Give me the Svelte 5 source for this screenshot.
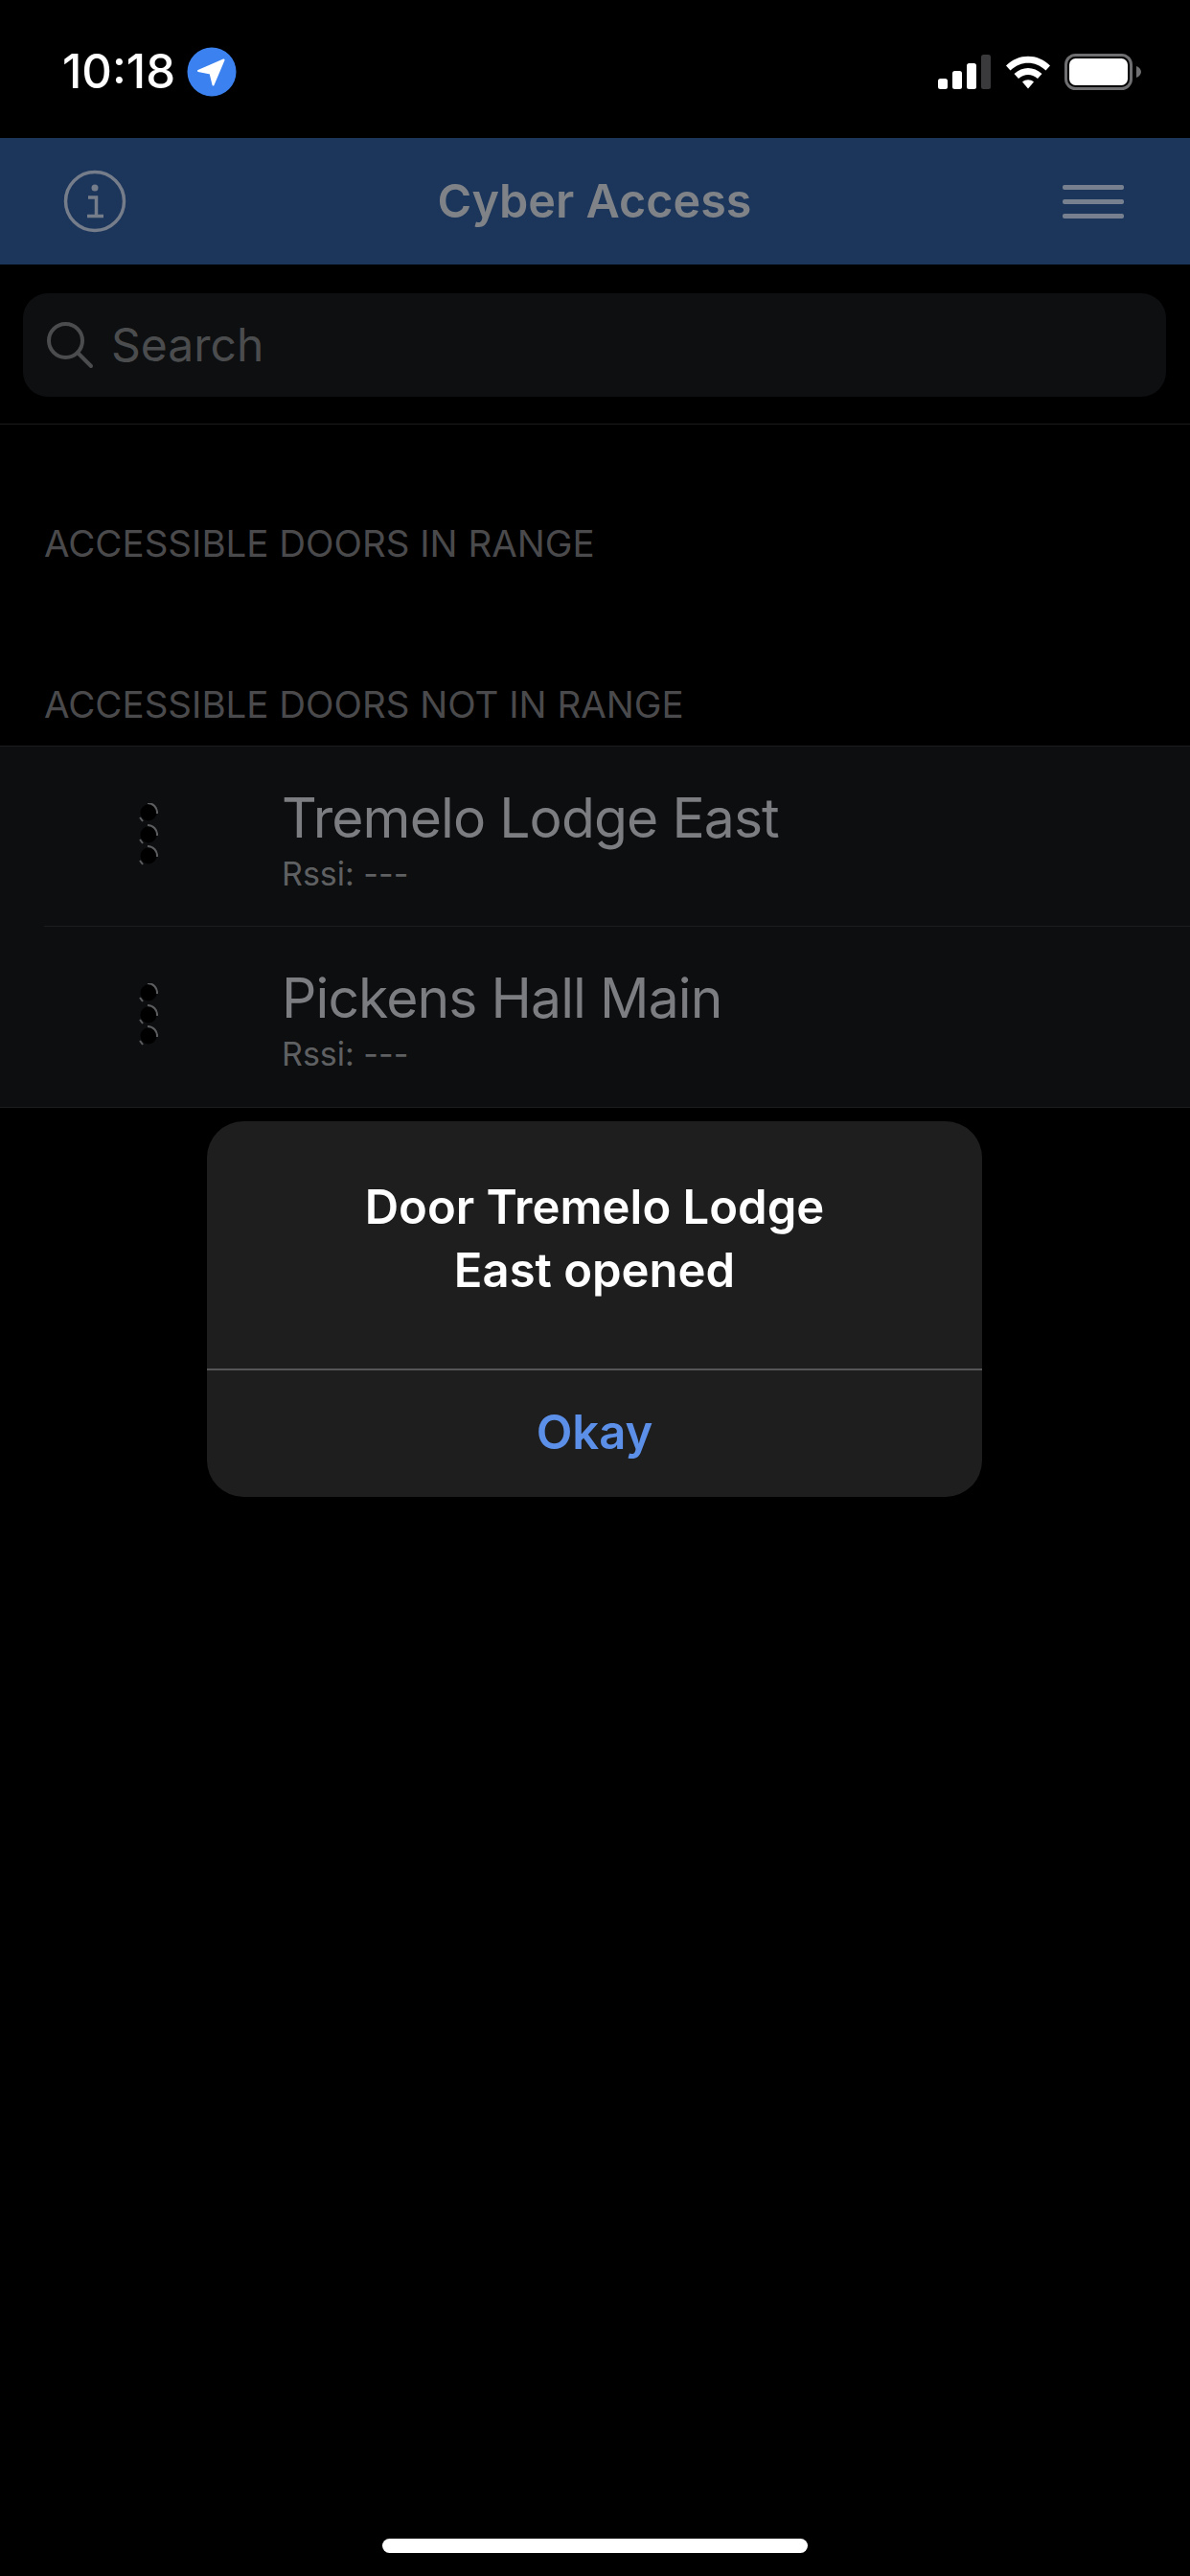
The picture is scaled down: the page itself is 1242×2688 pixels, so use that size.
<script>
	const doors = ['Tremelo Lodge East', 'Pickens Hall Main'];
</script>

<div class="screen">
	<header class="status">
		<div class="clock">
			<span class="time">10:18</span>
			<svg class="loc" viewBox="0 0 52 52" width="52" height="52">
				<circle cx="26" cy="26" r="25.5" fill="#3b82f0" />
				<path d="M12 25 L38.5 13.5 L27.5 39.5 L24.6 27.6 Z" fill="#fff" stroke="#fff" stroke-width="2" stroke-linejoin="round" />
			</svg>
		</div>
		<div class="indicators">
			<svg viewBox="0 0 56 36" width="56" height="36">
				<rect x="0" y="25" width="10" height="11" rx="2.5" fill="#fff" />
				<rect x="15" y="17" width="10" height="19" rx="2.5" fill="#fff" />
				<rect x="30" y="9" width="10" height="27" rx="2.5" fill="#fff" />
				<rect x="45" y="0" width="10" height="36" rx="2.5" fill="#3a3a3c" />
			</svg>
			<svg viewBox="0 0 48 36" width="48" height="36">
				<path d="M1 11.5 C14 -1.5 34 -1.5 47 11.5 L42.5 16.5 C31.5 6 16.5 6 5.5 16.5 Z" fill="#fff" />
				<path d="M9.5 20 C18 12 30 12 38.500 20 L34 25 C27.500 19.500 20.500 19.500 14 25 Z" fill="#fff" />
				<path d="M18 28.500 C21.500 25.500 26.500 25.500 30 28.500 L24 35.500 Z" fill="#fff" />
			</svg>
			<svg viewBox="0 0 81 38" width="81" height="38">
				<rect x="1.500" y="1.500" width="68" height="35" rx="10" fill="none" stroke="#6f6f71" stroke-width="3" />
				<rect x="5" y="5" width="61" height="28" rx="6.500" fill="#fff" />
				<path d="M75 13 C78 14 80 16.500 80 19 C80 21.500 78 24 75 25 Z" fill="#6f6f71" />
			</svg>
		</div>
	</header>

	<nav class="bar">
		<svg class="info" viewBox="0 0 66 66" width="66" height="66" fill="none" stroke="#757c8a" stroke-width="3.500">
			<circle cx="33" cy="33" r="30.500" />
			<circle cx="33" cy="19" r="3.500" fill="#757c8a" stroke="none" />
			<path d="M26 29 H34.500 V48 M25 48.500 H42" stroke-width="3.500" />
		</svg>
		<h1>Cyber Access</h1>
		<div class="menu"><i></i><i></i><i></i></div>
	</nav>

	<div class="search-wrap">
		<div class="search">
			<svg viewBox="0 0 50 50" width="50" height="50" fill="none" stroke="#4b4c4e" stroke-width="4" stroke-linecap="round">
				<circle cx="20.500" cy="20.500" r="17.500" />
				<path d="M33 33 L47 47" />
			</svg>
			<span>Search</span>
		</div>
	</div>

	<h2 class="section first">ACCESSIBLE DOORS IN RANGE</h2>
	<h2 class="section">ACCESSIBLE DOORS NOT IN RANGE</h2>

	<ul class="list">
		{#each doors as door}
			<li>
				<svg class="spin" viewBox="0 0 20 66" width="20" height="66" fill="none" stroke="#5c5d5f" stroke-width="2">
					{#each [10, 33, 55] as cy}
						<circle cx="10" {cy} r="8.500" fill="#000" stroke="none" />
						<path d={`M9 ${cy - 10} A 10 10 0 0 1 19 ${cy + 1}`} />
						<path d={`M1 ${cy + 5} L4 ${cy + 9}`} />
					{/each}
				</svg>
				<div class="text">
					<div class="name">{door}</div>
					<div class="rssi">Rssi: ---</div>
				</div>
			</li>
		{/each}
	</ul>

	<div class="alert">
		<div class="message">Door Tremelo Lodge<br />East opened</div>
		<div class="action">Okay</div>
	</div>

	<div class="home"></div>
</div>

<style>
	:global(body) {
		margin: 0;
		background: #000;
	}

	.screen {
		position: relative;
		width: 1242px;
		height: 2688px;
		overflow: hidden;
		background: #000;
		font-family: Inter, 'Liberation Sans', sans-serif;
	}

	.status {
		height: 144px;
		box-sizing: border-box;
		padding: 49px 50px 0 65px;
		display: flex;
		justify-content: space-between;
		align-items: flex-start;
	}

	.clock {
		display: flex;
		align-items: center;
		gap: 12px;
	}

	.time {
		width: 118px;
		color: #fff;
		font-size: 49px;
		font-weight: 500;
		line-height: 52px;
		white-space: nowrap;
	}

	.indicators {
		display: flex;
		align-items: center;
		gap: 14px;
		padding-top: 7px;
	}

	.bar {
		height: 132px;
		background: #1c355a;
		display: flex;
		align-items: center;
		justify-content: space-between;
		padding: 0 69px 0 66px;
	}

	h1 {
		margin: 0;
		color: #7f8388;
		font-size: 48.5px;
		font-weight: 600;
		line-height: 60px;
	}

	.menu {
		width: 64px;
		display: flex;
		flex-direction: column;
		gap: 10px;
	}

	.menu i {
		display: block;
		height: 5px;
		border-radius: 2px;
		background: #76808f;
	}

	.search-wrap {
		padding: 30px 25px 28px 24px;
		border-bottom: 1px solid #1a1b1d;
	}

	.search {
		height: 108px;
		box-sizing: border-box;
		padding: 0 0 0 24px;
		border-radius: 26px;
		background: #0e0f11;
		display: flex;
		align-items: center;
		gap: 18px;
		color: #4b4c4e;
		font-size: 48px;
		line-height: 60px;
	}

	.section {
		margin: 0;
		padding: 0 0 0 46px;
		color: #4a4a4c;
		font-size: 38.5px;
		font-weight: 400;
		line-height: 44px;
		height: 44px;
	}

	.first {
		margin-top: 102px;
		margin-bottom: 124px;
	}

	.list {
		margin: 21px 0 0;
		padding: 0;
		list-style: none;
		background: #0d0e10;
		border-top: 1px solid #1c1d1f;
		border-bottom: 1px solid #1c1d1f;
	}

	.list li {
		height: 188px;
		margin-left: 46px;
		box-sizing: border-box;
		padding-top: 59px;
		display: flex;
		align-items: flex-start;
		gap: 129px;
		padding-left: 99px;
		border-bottom: 1px solid #1c1d1f;
	}

	.list li:last-child {
		border-bottom: 0;
	}

	.spin {
		flex: none;
	}

	.text {
		margin-top: -17px;
	}

	.name {
		color: #7c7d80;
		font-size: 57px;
		letter-spacing: -0.9px;
		line-height: 66px;
	}

	.rssi {
		margin-top: 5px;
		color: #5f6062;
		font-size: 34px;
		line-height: 40px;
	}

	.alert {
		position: absolute;
		left: 216px;
		top: 1170px;
		width: 809px;
		height: 392px;
		border-radius: 38px;
		background: #1e1e1f;
		display: flex;
		flex-direction: column;
	}

	.message {
		height: 260px;
		box-sizing: border-box;
		padding-top: 57px;
		border-bottom: 2px solid #555557;
		color: #fff;
		text-align: center;
		font-size: 49px;
		font-weight: 600;
		line-height: 66px;
	}

	.action {
		flex: 1;
		display: flex;
		align-items: center;
		justify-content: center;
		padding-bottom: 3px;
		color: #5b8fe8;
		font-size: 49px;
		font-weight: 600;
	}

	.home {
		position: absolute;
		left: 399px;
		top: 2649px;
		width: 444px;
		height: 15px;
		border-radius: 8px;
		background: #fff;
	}
</style>
